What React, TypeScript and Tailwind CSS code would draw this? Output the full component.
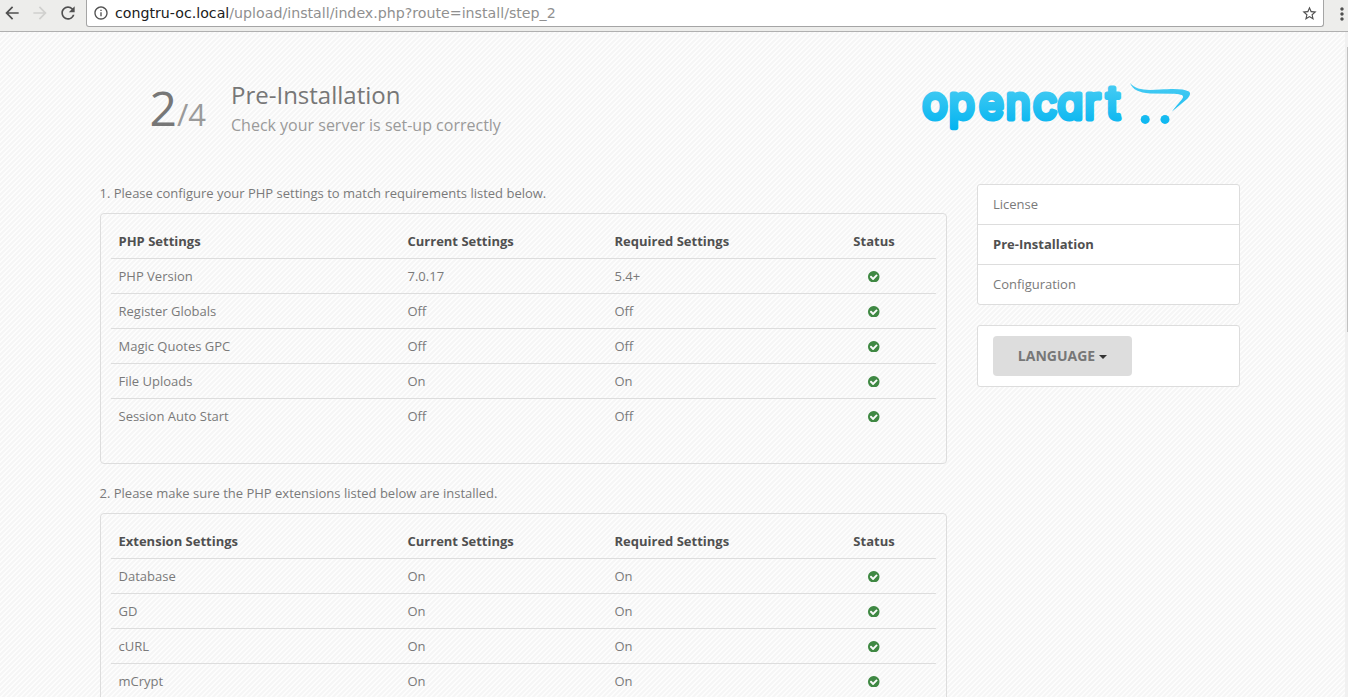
import React from "react";
import { MdArrowBack, MdArrowForward, MdRefresh, MdInfoOutline, MdStarBorder, MdMoreVert } from "react-icons/md";

const phpSettings = [
  ["PHP Version", "7.0.17", "5.4+"],
  ["Register Globals", "Off", "Off"],
  ["Magic Quotes GPC", "Off", "Off"],
  ["File Uploads", "On", "On"],
  ["Session Auto Start", "Off", "Off"],
];

const extensions = [
  ["Database", "On", "On"],
  ["GD", "On", "On"],
  ["cURL", "On", "On"],
  ["mCrypt", "On", "On"],
];

function BrowserBar() {
  return (
    <header className="flex h-8 shrink-0 items-start border-b border-[#b0b0b0] bg-[#ededeb] text-[#505050]">
      <div className="flex w-[86px] shrink-0 items-center pl-[2px] pt-[3px]">
        <MdArrowBack className="size-5" />
        <MdArrowForward className="ml-2 size-5 text-[#d0d0ce]" />
        <MdRefresh className="ml-2 size-5" />
      </div>
      <div className="flex h-[27px] w-[1238px] shrink-0 items-center rounded-b-[3px] border border-t-0 border-[#a5a5a5] bg-white pl-[6px] pr-[5px]">
        <MdInfoOutline className="size-4" />
        <div className="ml-[6px] flex-1 whitespace-nowrap font-['DejaVu_Sans',sans-serif] text-[14.2px] leading-[20px] text-[#909090]">
          <span className="text-[#202020]">congtru-oc.local</span>/upload/install/index.php?route=install/step_2
        </div>
        <MdStarBorder className="size-[17px]" />
      </div>
      <MdMoreVert className="ml-2 mt-1 size-5 shrink-0" />
    </header>
  );
}

function Logo() {
  return (
    <svg className="h-[50px] w-[270px] overflow-visible" viewBox="921 82 270 50" role="img" aria-label="opencart">
      <defs>
        <linearGradient id="brand" gradientUnits="userSpaceOnUse" x1="0" y1="82" x2="0" y2="132">
          <stop offset="0" stopColor="#4bcdf3" />
          <stop offset="1" stopColor="#00b3f0" />
        </linearGradient>
        <linearGradient id="brand-text" gradientUnits="userSpaceOnUse" x1="0" y1="-34" x2="0" y2="12">
          <stop offset="0" stopColor="#4bcdf3" />
          <stop offset="1" stopColor="#00b3f0" />
        </linearGradient>
      </defs>
      <text
        className="font-['Inter',sans-serif] [font-feature-settings:'cv11']"
        transform="translate(0 118.5) scale(1 1.08)"
        x="922.300 948.700 979 1005.800 1033 1057.300 1084.500 1106.200"
        y="0"
        fontWeight="400"
        fontSize="42.5"
        fill="url(#brand-text)"
        stroke="url(#brand-text)"
        strokeWidth="4.6"
        strokeLinejoin="round"
      >
        opencart
      </text>
      <g fill="url(#brand)">
        <path d="M1130 83 C1136 90 1145 90.500 1160 89.500 C1174 88.500 1184 88.500 1189 91.500 C1191 93 1190 96 1187 99 L1172 111.500 C1176 106 1181 101 1183 97.500 C1184 94.500 1179 94 1172 93.700 L1150 93.500 C1139 92.500 1133 90 1130 83 Z" />
        <circle cx="1145.200" cy="119.400" r="4.500" />
        <circle cx="1165" cy="119.400" r="4.500" />
      </g>
    </svg>
  );
}

function CheckCircle() {
  return (
    <svg className="mt-px size-[11.5px] fill-[#3f8843]" viewBox="0 0 1536 1536" aria-hidden="true">
      <path d="M1284 606q0-28-18-46l-91-90q-19-19-45-19t-45 19l-408 407-226-226q-19-19-45-19t-45 19l-91 90q-18 18-18 46 0 27 18 45l362 362q19 19 45 19 27 0 46-19l543-543q18-18 18-45zM1536 768q0 209-103 385.500t-279.500 279.500-385.500 103-385.500-103-279.500-279.500-103-385.500 103-385.500 279.500-279.500 385.500-103 385.500 103 279.500 279.500 103 385.500z" />
    </svg>
  );
}

function SettingsTable({ title, rows, open }: { title: string; rows: string[][]; open?: boolean }) {
  const grid = "grid grid-cols-[289px_207px_206px_123px] h-[35px] items-center";
  return (
    <div className="mb-5 h-[251px] rounded-[4px] border border-[#dddddd] p-[10px]">
      <div className={`${grid} border-b border-[#dddddd] font-bold text-[#505050]`}>
        <div className="px-[7.5px]">{title}</div>
        <div className="px-[7.5px]">Current Settings</div>
        <div className="px-[7.5px]">Required Settings</div>
        <div className="pr-px text-center">Status</div>
      </div>
      {rows.map((row, i) => (
        <div
          key={row[0]}
          className={`${grid} border-b ${open || i < rows.length - 1 ? "border-[#dddddd]" : "border-transparent"}`}
        >
          <div className="px-[7.5px]">{row[0]}</div>
          <div className="px-[7.5px]">{row[1]}</div>
          <div className="px-[7.5px]">{row[2]}</div>
          <div className="flex justify-center pr-px">
            <CheckCircle />
          </div>
        </div>
      ))}
    </div>
  );
}

export default function App() {
  return (
    <div className="flex h-[697px] flex-col overflow-hidden font-['Open_Sans',sans-serif] text-[13px] leading-5 text-[#7a7a7a]">
      <BrowserBar />
      <div className="flex min-h-0 flex-1 bg-[linear-gradient(135deg,#fdfdfd_0%,#fdfdfd_18%,#f6f6f6_18%,#f6f6f6_50%,#fdfdfd_50%,#fdfdfd_68%,#f6f6f6_68%)] bg-size-[5px_5px]">
        <div className="min-w-0 flex-1 overflow-hidden pl-[100px]">
          <div className="flex h-[151px] w-[1140px] items-start justify-between pl-[50px] pr-[49px] pt-[50px]">
            <div className="-mt-px flex">
              <div className="-ml-[0.5px] w-[81.5px] whitespace-nowrap text-[48px] leading-[53px] text-[#777777]">
                2<span className="text-[31px] text-[#9a9a9a]">/4</span>
              </div>
              <div>
                <div className="text-[24px] leading-[27px] text-[#777777]">Pre-Installation</div>
                <div className="mt-[5px] text-[16px] leading-[24px] text-[#9a9a9a]">Check your server is set-up correctly</div>
              </div>
            </div>
            <Logo />
          </div>
          <div className="flex items-start gap-[30px]">
            <main className="w-[847px] shrink-0">
              <p className="-ml-[0.5px] mb-[10px]">1. Please configure your PHP settings to match requirements listed below.</p>
              <SettingsTable title="PHP Settings" rows={phpSettings} />
              <p className="-ml-[0.5px] -mt-px mb-[10px]">2. Please make sure the PHP extensions listed below are installed.</p>
              <SettingsTable title="Extension Settings" rows={extensions} open />
            </main>
            <aside className="w-[263px] shrink-0 pt-px">
              <nav className="divide-y divide-[#dddddd] rounded-[3px] border border-[#dddddd] bg-white">
                <div className="h-10 px-[15px] py-[9px]">License</div>
                <div className="h-10 px-[15px] py-[9px] font-bold text-[#505050]">Pre-Installation</div>
                <div className="h-[39px] px-[15px] py-[9px]">Configuration</div>
              </nav>
              <div className="mt-5 h-[62px] rounded-[3px] border border-[#dddddd] bg-white px-[15px] py-[10px]">
                <button className="flex h-10 w-[139px] items-center justify-center rounded-[4px] bg-[#dddddd] text-[14px] font-bold text-[#777777]">
                  LANGUAGE
                  <span className="ml-1 mt-px border-x-4 border-t-4 border-x-transparent border-t-[#333333]" />
                </button>
              </div>
            </aside>
          </div>
        </div>
        <div className="w-[3px] shrink-0 bg-[#f1f1f1] pt-[15px]">
          <div className="ml-[2px] h-[285px] bg-[#c1c1c1]" />
        </div>
      </div>
    </div>
  );
}
